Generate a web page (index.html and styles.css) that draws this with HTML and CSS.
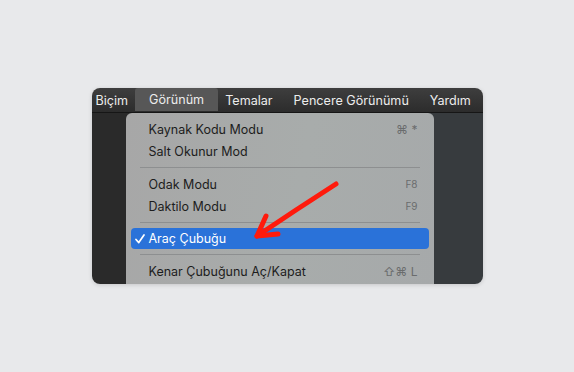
FILE: index.html
```html
<!DOCTYPE html>
<html lang="tr">
<head>
    <meta charset="UTF-8">
    <meta name="viewport" content="width=device-width, initial-scale=1.0">
    <title>Görünüm menüsü</title>
    <link rel="stylesheet" href="styles.css">
</head>
<body>
    <div class="window">
        <div class="menubar">
            <span class="menubar-item">Biçim</span>
            <span class="menubar-item active">Görünüm</span>
            <span class="menubar-item">Temalar</span>
            <span class="menubar-item">Pencere Görünümü</span>
            <span class="menubar-item">Yardım</span>
        </div>
        <div class="content">
            <div class="pane-left"></div>
            <div class="pane-right"></div>
        </div>

        <div class="dropdown">
            <div class="menu-item">
                <span class="label">Kaynak Kodu Modu</span>
                <span class="shortcut">⌘ *</span>
            </div>
            <div class="menu-item">
                <span class="label">Salt Okunur Mod</span>
            </div>
            <div class="separator"></div>
            <div class="menu-item">
                <span class="label">Odak Modu</span>
                <span class="shortcut small">F8</span>
            </div>
            <div class="menu-item">
                <span class="label">Daktilo Modu</span>
                <span class="shortcut small">F9</span>
            </div>
            <div class="separator"></div>
            <div class="menu-item selected">
                <svg class="check" width="10" height="10" viewBox="0 0 10 10">
                    <path d="M1 5.5 L3.8 8.6 L9 1" fill="none" stroke="#fff" stroke-width="1.7" stroke-linecap="round" stroke-linejoin="round"/>
                </svg>
                <span class="label">Araç Çubuğu</span>
            </div>
            <div class="separator"></div>
            <div class="menu-item">
                <span class="label">Kenar Çubuğunu Aç/Kapat</span>
                <span class="shortcut">⇧⌘ L</span>
            </div>
        </div>

        <!-- annotation arrow drawn over the screenshot -->
        <svg class="arrow" width="391" height="196" viewBox="0 0 391 196">
            <path d="M244 96 Q205 121 165 148" fill="none" stroke="#ff1a0c" stroke-width="5" stroke-linecap="round"/>
            <path d="M174 128 L165 148 L186 146" fill="none" stroke="#ff1a0c" stroke-width="5" stroke-linecap="round" stroke-linejoin="round"/>
        </svg>
    </div>
</body>
</html>
```

FILE: styles.css
```css
body {
    margin: 0;
    padding: 0;
    min-height: 100vh;
    display: flex;
    justify-content: center;
    align-items: center;
    background-color: #e8e9eb;
    font-family: Inter, "Noto Sans", sans-serif;
}

.window {
    position: relative;
    width: 391px;
    height: 196px;
    border-radius: 8px;
    overflow: hidden;
    display: flex;
    flex-direction: column;
    box-shadow: 0 1px 4px rgba(0, 0, 0, 0.15);
}

.menubar {
    height: 24px;
    display: flex;
    align-items: stretch;
    padding-left: 4px;
    background: linear-gradient(#3e3e3e, #2c2c2c);
    border-bottom: 1px solid #161616;
    color: #ececec;
    font-size: 12.6px;
    white-space: nowrap;
}

.menubar-item {
    flex-shrink: 0;
    display: flex;
    align-items: center;
    padding: 0 10.5px 0;
}

.menubar-item:first-child {
    padding-left: 0;
}

.menubar-item.active {
    padding: 0 14px 0;
    margin: 0 -3.5px 1px;
    background-color: #575757;
    border-radius: 3px 3px 0 0;
}

.content {
    flex: 1;
    display: flex;
}

.pane-left {
    width: 40px;
    background-color: #2a2a2a;
}

.pane-right {
    flex: 1;
    background-color: #373b3e;
}

.dropdown {
    position: absolute;
    left: 34px;
    top: 25px;
    width: 308px;
    height: 180px;
    padding-top: 5px;
    box-sizing: border-box;
    border-radius: 6px 6px 0 0;
    background: linear-gradient(100deg, #a7a7a7 0%, #a8acab 55%, #a6a9aa 100%);
    color: #1d1d1d;
    font-size: 12.5px;
}

.menu-item {
    position: relative;
    height: 22px;
    display: flex;
    align-items: center;
    justify-content: space-between;
    padding: 0 16px 0 23px;
}

.menu-item.selected {
    margin: 0 5px;
    height: 21px;
    margin-bottom: 1px;
    padding: 0 11px 0 18px;
    background-color: #2a72d9;
    border-radius: 4px;
    color: #fff;
}

.check {
    position: absolute;
    left: 4px;
    top: 6px;
}

.shortcut {
    color: #6a6c6d;
    font-size: 12px;
}

.shortcut.small {
    font-size: 10px;
}

.separator {
    height: 1px;
    margin: 5px 14px;
    background-color: #8d8f90;
}

.arrow {
    position: absolute;
    left: 0;
    top: 0;
    pointer-events: none;
}
```
